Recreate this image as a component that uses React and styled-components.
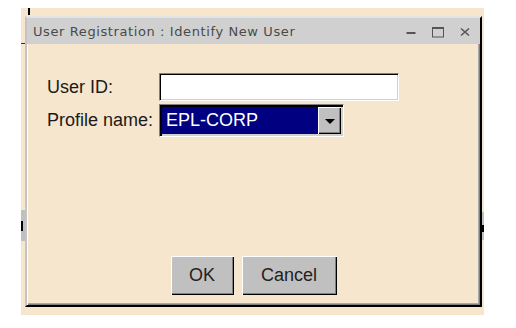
import React from 'react'
import styled, { createGlobalStyle } from 'styled-components'

const GlobalStyle = createGlobalStyle`
    html, body {
        margin: 0;
        padding: 0;
        background: #ffffff;
        font-family: "Liberation Sans", Arial, sans-serif;
    }
`

const Desktop = styled('div')`
    position: relative;
    margin: 8px 0 0 21px;
    width: 463px;
    height: 307px;
    box-sizing: border-box;
    padding: 8px 2px 8px 4px;
    background: #f5e6cd;
`

// bits of the windows lying behind the dialog
const Scrap = styled('div')`
    position: absolute;
    left: ${p => p.x}px;
    top: ${p => p.y}px;
    width: ${p => p.w}px;
    height: ${p => p.h}px;
    background: ${p => p.color || '#000'};
`

const Window = styled('div')`
    position: relative;
    width: 457px;
    height: 291px;
    box-sizing: border-box;
    display: flex;
    flex-direction: column;
    background: #f5e6cd;
    border: 2px solid;
    border-color: #e4e4e4 #000 #000 #c4c4c4;
    box-shadow: inset 1px 0 #ffffff, inset -1px -1px #808080, inset -2px -2px #a8a8a8;
`

const TitleBar = styled('div')`
    height: 26px;
    display: flex;
    align-items: center;
    padding: 0 9px 0 6px;
    background: #d0d0d0;
    color: #4a4a4a;
    font-family: "DejaVu Sans", sans-serif;
    font-size: 13px;
    letter-spacing: 0.6px;
    white-space: nowrap;
`

const Controls = styled('div')`
    margin-left: auto;
    display: flex;
    align-items: center;
    gap: 15px;
`

const Form = styled('div')`
    display: grid;
    grid-template-columns: auto auto;
    justify-content: start;
    align-items: center;
    column-gap: 6px;
    row-gap: 3px;
    padding: 29px 0 0 20px;
`

const Label = styled('span')`
    font-size: 18px;
    color: #1a1a1a;
`

const TextField = styled('div')`
    width: 240px;
    height: 28px;
    box-sizing: border-box;
    background: #ffffff;
    border: 1px solid;
    border-color: #808080 #ffffff #ffffff #808080;
    box-shadow: inset 1px 1px #000, inset -1px -1px #d4d0c8;
`

const Select = styled('div')`
    width: 185px;
    height: 33px;
    box-sizing: border-box;
    display: flex;
    padding: 2px;
    border: 1px solid;
    border-color: #808080 #ffffff #ffffff #808080;
    box-shadow: inset 2px 2px #000, inset -2px -2px #d4d0c8;
    background: #d4d0c8;
`

const SelectValue = styled('div')`
    flex: 1;
    display: flex;
    align-items: center;
    padding-left: 4px;
    background: #000080;
    color: #ffffff;
    font-size: 18px;
`

const ArrowButton = styled('div')`
    width: 23px;
    display: flex;
    align-items: center;
    justify-content: center;
    background: #c0c0c0;
    box-shadow: inset 1px 1px #ffffff, inset -1px -1px #000, inset -2px -2px #808080;

    &::after {
        content: '';
        border-left: 5px solid transparent;
        border-right: 5px solid transparent;
        border-top: 5px solid #000;
        margin-top: 1px;
    }
`

const ButtonRow = styled('div')`
    margin-top: auto;
    display: flex;
    justify-content: center;
    gap: 8px;
    padding-bottom: 10px;
`

const Button = styled('button')`
    width: ${p => p.width}px;
    height: 39px;
    padding: 0;
    border: 0;
    background: #c0c0c0;
    color: #222222;
    font-family: "Liberation Sans", Arial, sans-serif;
    font-size: 18px;
    box-shadow: inset 1px 1px #ffffff, inset -1px -1px #000, inset -2px -2px #808080;
`

const MinimizeIcon = () => (
    <svg width="12" height="14" viewBox="0 0 12 14">
        <rect x="1.5" y="8" width="9" height="2" fill="#555" />
    </svg>
)

const MaximizeIcon = () => (
    <svg width="12" height="14" viewBox="0 0 12 14">
        <rect x="0.5" y="3.5" width="11" height="9.5" fill="none" stroke="#555" />
        <rect x="0" y="3" width="12" height="2" fill="#555" />
    </svg>
)

const CloseIcon = () => (
    <svg width="12" height="14" viewBox="0 0 12 14">
        <path d="M2 4.5 L10 11.5 M10 4.5 L2 11.5" stroke="#555" strokeWidth="1.6" />
    </svg>
)

const App = () => {
    return (
        <>
            <GlobalStyle />
            <Desktop>
                <Scrap x={7} y={0} w={2} h={7} />
                <Scrap x={0} y={35} w={4} h={1} color="#333" />
                <Scrap x={0} y={202} w={4} h={31} color="#c0c0c0" />
                <Scrap x={0} y={213} w={2} h={10} />
                <Scrap x={461} y={204} w={2} h={28} color="#c0c0c0" />
                <Scrap x={461} y={217} w={2} h={7} />
                <Window>
                    <TitleBar>
                        User Registration : Identify New User
                        <Controls>
                            <MinimizeIcon />
                            <MaximizeIcon />
                            <CloseIcon />
                        </Controls>
                    </TitleBar>
                    <Form>
                        <Label>User ID:</Label>
                        <TextField />
                        <Label>Profile name:</Label>
                        <Select>
                            <SelectValue>EPL-CORP</SelectValue>
                            <ArrowButton />
                        </Select>
                    </Form>
                    <ButtonRow>
                        <Button width={63}>OK</Button>
                        <Button width={95}>Cancel</Button>
                    </ButtonRow>
                </Window>
            </Desktop>
        </>
    )
}

export default App
